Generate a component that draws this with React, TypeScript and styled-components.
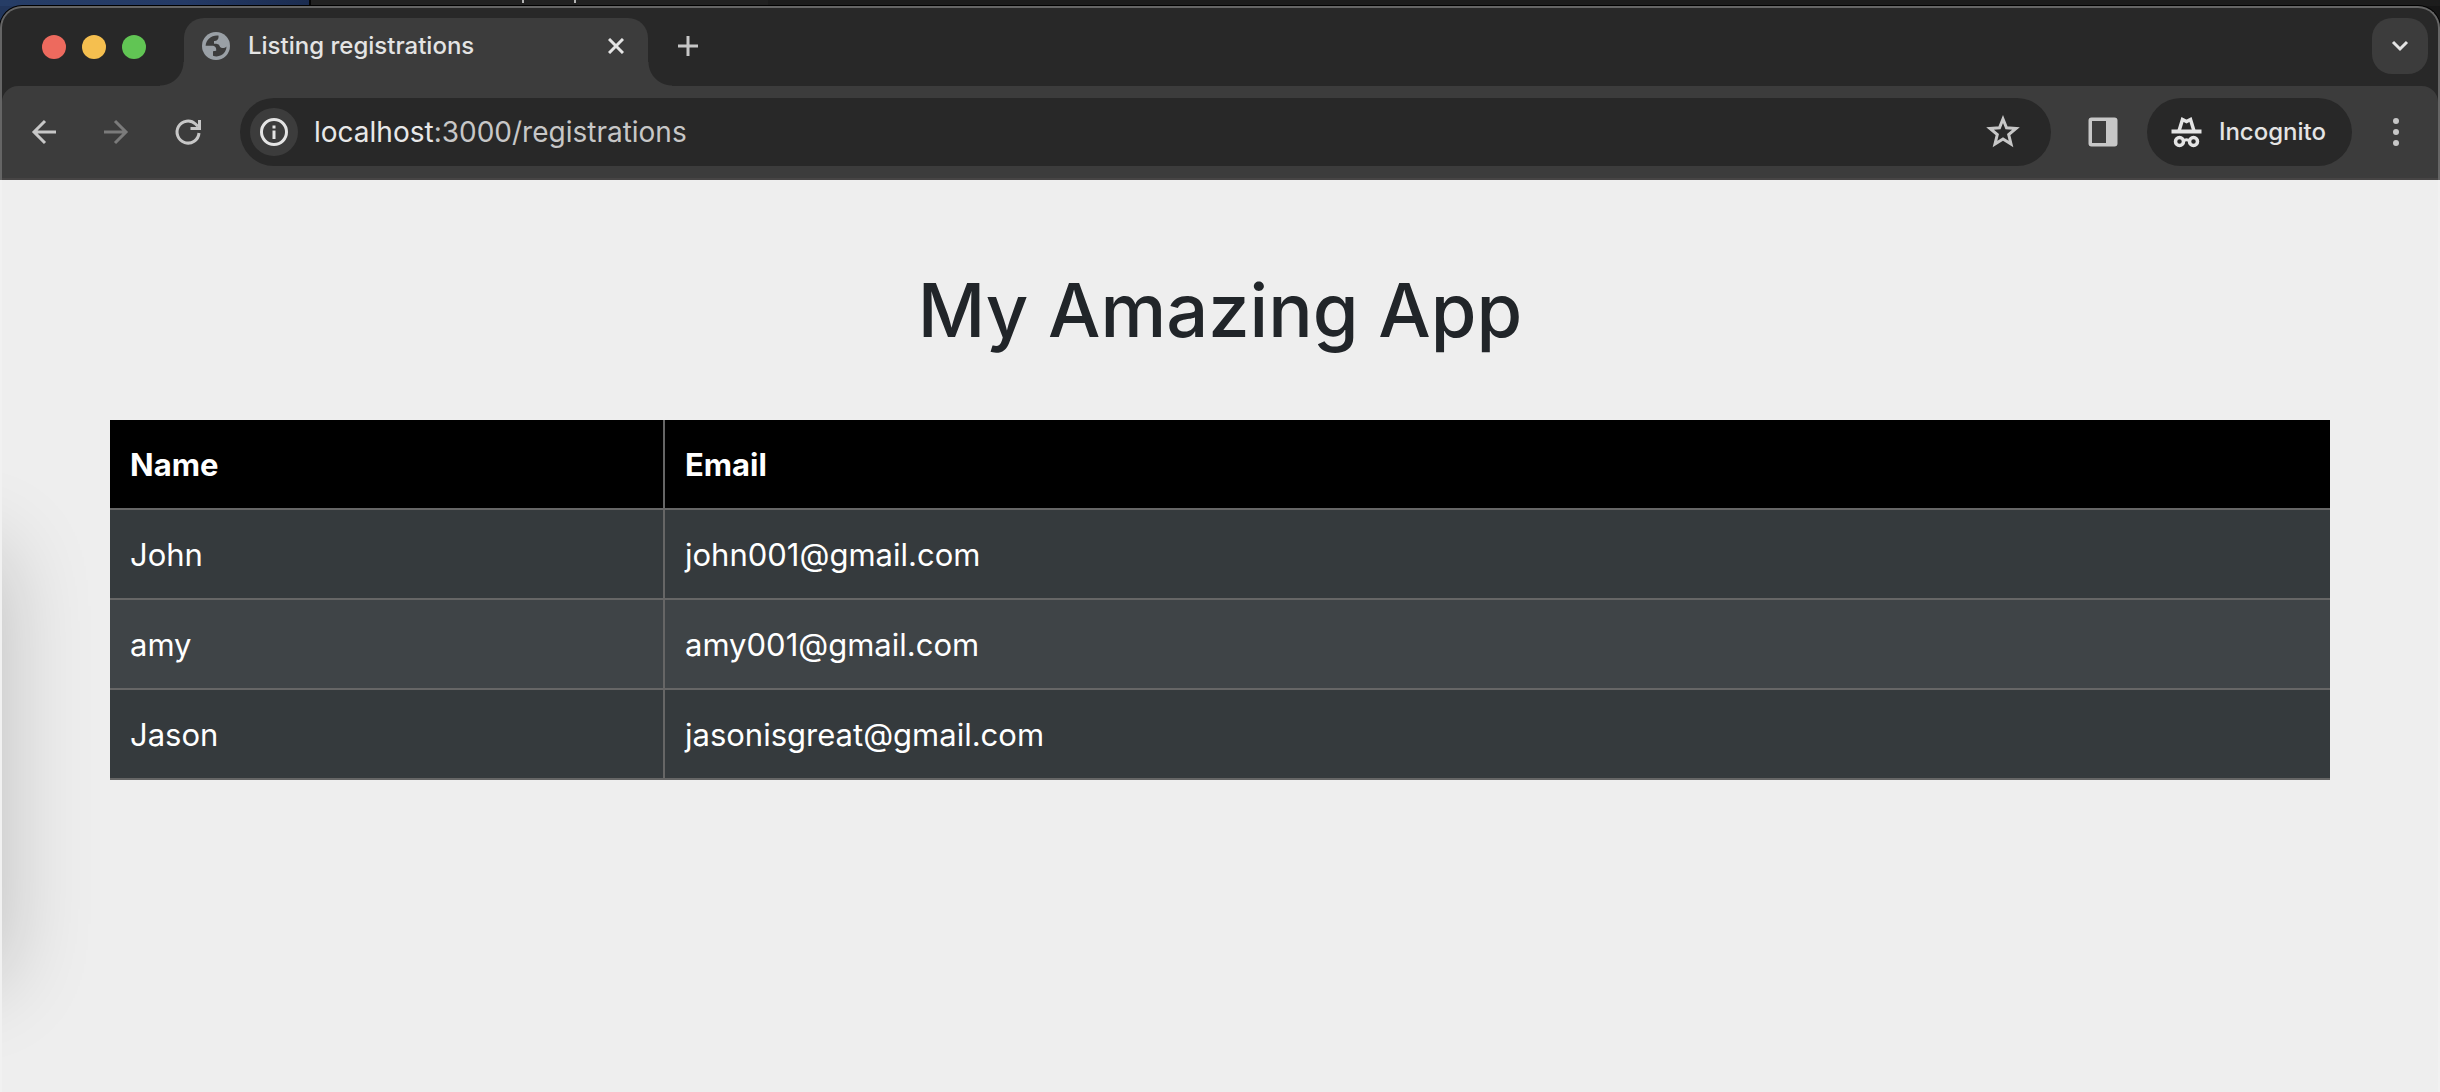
import React from "react";
import styled, { createGlobalStyle, css } from "styled-components";

const GlobalStyle = createGlobalStyle`
  *, *::before, *::after { box-sizing: border-box; }
  html, body { margin: 0; background: #eeeeee; }
  body { font-family: Inter, "Liberation Sans", sans-serif; }
  button, input { font: inherit; color: inherit; }
`;

const Screen = styled.div`
  min-height: 100vh;
  display: flex;
  flex-direction: column;
  background: #1b1b1b;
`;

/* Sliver of the desktop behind the browser window */
const Desktop = styled.div`
  display: flex;
  height: 6px;
  background: #1c1c1c;
`;
const Wallpaper = styled.div`
  width: 311px;
  background: linear-gradient(90deg, #263d66, #243a66 60%, #1b2c50);
  border-right: 2px solid #060606;
`;
const OtherWindow = styled.div`
  display: flex;
  gap: 50px;
  width: 457px;
  padding-left: 211px;
  background: #212121;
`;
const Stroke = styled.span`
  width: 2px;
  height: 3px;
  background: #b4b4b4;
`;

const ChromeBack = styled.div`
  background: linear-gradient(90deg, #22365c 0 311px, #161616 311px);
`;
const Chrome = styled.header`
  background: #282828;
  border: 2px solid #656565;
  border-bottom: 0;
  border-radius: 22px 22px 0 0;
  box-shadow: 0 0 0 1px #000000;
  overflow: hidden;
`;

const TabStrip = styled.div`
  display: flex;
  align-items: flex-end;
  height: 78px;
`;
const Lights = styled.div`
  display: flex;
  gap: 16px;
  align-self: center;
  padding: 0 38px 0 40px;
`;
const Light = styled.button<{ $color: string }>`
  width: 24px;
  height: 24px;
  padding: 0;
  border: 0;
  border-radius: 50%;
  background: ${(p) => p.$color};
`;
const Tab = styled.div`
  position: relative;
  display: flex;
  align-items: center;
  width: 464px;
  height: 68px;
  padding: 0 18px 12px;
  border-radius: 20px 20px 0 0;
  background: #3c3c3c;
  color: #e4e4e4;
  &::before,
  &::after {
    content: "";
    position: absolute;
    bottom: 0;
    width: 24px;
    height: 24px;
  }
  &::before {
    right: 100%;
    background: radial-gradient(circle at 0 0, transparent 23px, #3c3c3c 24px);
  }
  &::after {
    left: 100%;
    background: radial-gradient(circle at 100% 0, transparent 23px, #3c3c3c 24px);
  }
`;
const TabTitle = styled.span`
  flex: 1;
  margin-left: 18px;
  font-size: 24px;
  line-height: 28px;
  font-weight: 500;
  white-space: nowrap;
`;
const IconButton = styled.button<{ $size?: number; $dim?: boolean }>`
  display: grid;
  place-items: center;
  flex: none;
  width: ${(p) => p.$size ?? 56}px;
  height: ${(p) => p.$size ?? 56}px;
  padding: 0;
  border: 0;
  border-radius: 20px;
  background: none;
  color: ${(p) => (p.$dim ? "#7b7b7b" : "#c7c7c7")};
  svg { display: block; }
`;
const CloseButton = styled(IconButton)`
  color: #e4e4e4;
`;
const NewTab = styled(IconButton)`
  margin: 0 auto 12px 12px;
`;
const TabSearch = styled(IconButton)`
  margin: 0 10px 12px 0;
  background: #3c3c3c;
  color: #e4e4e4;
`;

const Toolbar = styled.div`
  display: flex;
  align-items: center;
  height: 94px;
  padding: 10px 14px 10px;
  background: #3c3c3c;
  border-bottom: 2px solid #474545;
  border-radius: 16px 16px 0 0;
`;
const NavButtons = styled.div`
  display: flex;
  gap: 16px;
  margin-right: 24px;
`;
const pill = css`
  display: flex;
  align-items: center;
  height: 68px;
  border: 0;
  border-radius: 34px;
  background: #282828;
`;
const AddressBar = styled.form`
  ${pill}
  flex: 1;
  min-width: 0;
  padding: 0 20px 0 10px;
`;
const SiteInfo = styled(IconButton)`
  border-radius: 50%;
  background: #3c3c3c;
  color: #e4e4e4;
`;
const Url = styled.a`
  flex: 1;
  min-width: 0;
  margin-left: 16px;
  font-size: 28px;
  line-height: 36px;
  color: #c7c7c7;
  text-decoration: none;
  white-space: nowrap;
`;
const Host = styled.span`
  color: #e8e8e8;
`;
const SidePanel = styled(IconButton)`
  margin: 0 16px 0 24px;
`;
const Incognito = styled.button`
  ${pill}
  gap: 17px;
  padding: 0 26px 0 24px;
  color: #e4e4e4;
  font-size: 24px;
  line-height: 28px;
  font-weight: 500;
`;
const Menu = styled(IconButton)`
  margin-left: 16px;
`;

const Page = styled.main`
  position: relative;
  flex: 1;
  padding: 82px 108px 60px;
  border: 2px solid #f1f1f1;
  border-width: 0 2px;
  background: #eeeeee;
  overflow: hidden;
`;
/* Shadow cast on the page by a window off the left edge */
const EdgeShadow = styled.div`
  position: absolute;
  top: 380px;
  left: -100px;
  width: 92px;
  height: 410px;
  box-shadow: 0 0 90px 10px rgba(0, 0, 0, 0.2);
`;
const Title = styled.h1`
  margin: 0 0 62px;
  font-size: 74px;
  line-height: 96px;
  font-weight: 500;
  text-align: center;
  color: #212529;
`;
const Table = styled.table`
  width: 100%;
  table-layout: fixed;
  border-spacing: 0;
  color: #ffffff;
  font-size: 31px;
  line-height: 48px;
`;
const cell = css`
  padding: 21px 20px 19px;
  border-bottom: 2px solid #666666;
  text-align: left;
  &:first-child {
    width: 25%;
    border-right: 2px solid #666666;
  }
`;
const Th = styled.th`
  ${cell}
  background: #000000;
  font-weight: 700;
`;
const Td = styled.td`
  ${cell}
`;
const Row = styled.tr`
  background: #353a3d;
  &:nth-child(even) { background: #3f4447; }
`;

const registrations = [
  { name: "John", email: "john001@gmail.com" },
  { name: "amy", email: "amy001@gmail.com" },
  { name: "Jason", email: "jasonisgreat@gmail.com" },
];

const Globe = () => (
  <svg width="28" height="28" viewBox="0 0 28 28" aria-hidden="true">
    <circle cx="14" cy="14" r="14" fill="#9aa0a6" />
    <path
      d="M16.500 3.500C9.500 2.800 4 7.500 3.600 13.800H10C13 13.800 14.600 15.600 14.200 18.800L11 19.300V23.700C15 25.400 20 24 22.800 20C24 18.200 24.500 16.500 24.400 14.600C22.500 16.800 18.500 16.600 17.600 14C17 12.200 15.500 11.800 12 11.800V9C14.500 9 17 7.800 16.500 3.500Z"
      fill="#3c3c3c"
    />
  </svg>
);

const Line = ({ d, size = 28, width = 3 }: { d: string; size?: number; width?: number }) => (
  <svg width={size} height={size} viewBox={`0 0 ${size} ${size}`} fill="none" stroke="currentColor" strokeWidth={width} aria-hidden="true">
    <path d={d} />
  </svg>
);

export default function App() {
  return (
    <Screen>
      <GlobalStyle />
      <Desktop>
        <Wallpaper />
        <OtherWindow>
          <Stroke />
          <Stroke />
        </OtherWindow>
      </Desktop>
      <ChromeBack>
        <Chrome>
          <TabStrip>
            <Lights>
              <Light $color="#ed6a5e" aria-label="Close window" />
              <Light $color="#f5bf4f" aria-label="Minimize window" />
              <Light $color="#61c554" aria-label="Zoom window" />
            </Lights>
            <Tab>
              <Globe />
              <TabTitle>Listing registrations</TabTitle>
              <CloseButton $size={28} aria-label="Close tab">
                <Line size={16} d="M1 1 15 15M15 1 1 15" />
              </CloseButton>
            </Tab>
            <NewTab aria-label="New tab">
              <Line size={20} d="M10 0V20M0 10H20" />
            </NewTab>
            <TabSearch aria-label="Search tabs">
              <Line size={20} d="M3 6 10 13 17 6" />
            </TabSearch>
          </TabStrip>
          <Toolbar>
            <NavButtons>
              <IconButton aria-label="Back">
                <Line d="M26 14H4M15 3 4 14 15 25" />
              </IconButton>
              <IconButton $dim aria-label="Forward">
                <Line d="M2 14H24M13 3 24 14 13 25" />
              </IconButton>
              <IconButton aria-label="Reload">
                <Line d="M25 15A11 11 0 1 1 21.500 6L24 8.500M25.500 2V10.500H16.500" />
              </IconButton>
            </NavButtons>
            <AddressBar>
              <SiteInfo $size={48} type="button" aria-label="View site information">
                <svg width="28" height="28" viewBox="0 0 28 28" fill="currentColor" aria-hidden="true">
                  <circle cx="14" cy="14" r="12.500" fill="none" stroke="currentColor" strokeWidth="3" />
                  <rect x="12.500" y="12.500" width="3" height="8.500" />
                  <rect x="12.500" y="7.500" width="3" height="3" />
                </svg>
              </SiteInfo>
              <Url href="#registrations">
                <Host>localhost</Host>:3000/registrations
              </Url>
              <IconButton type="button" aria-label="Bookmark this tab">
                <svg width="34" height="34" viewBox="0 0 34 34" fill="none" stroke="currentColor" strokeWidth="3" aria-hidden="true">
                  <path d="M17 4 20.500 12.800 30 13.500 22.700 19.600 25 29 17 24 9 29 11.300 19.600 4 13.500 13.500 12.800Z" />
                </svg>
              </IconButton>
            </AddressBar>
            <SidePanel aria-label="Side panel">
              <svg width="30" height="30" viewBox="0 0 30 30" aria-hidden="true">
                <path
                  fill="currentColor"
                  fillRule="evenodd"
                  d="M3.500.500H26.500a3 3 0 0 1 3 3V26.500a3 3 0 0 1-3 3H3.500a3 3 0 0 1-3-3V3.500a3 3 0 0 1 3-3ZM4 4V26H18V4Z"
                />
              </svg>
            </SidePanel>
            <Incognito>
              <svg width="31" height="31" viewBox="0 0 31 31" fill="none" stroke="currentColor" aria-hidden="true">
                <path d="M.5 14.500H30.500" strokeWidth="4" />
                <path d="M8 14 11.500 2.500 15.500 4.500 19.500 2.500 23 14" strokeWidth="3.500" />
                <circle cx="8.500" cy="24.500" r="4" strokeWidth="3.500" />
                <circle cx="22.500" cy="24.500" r="4" strokeWidth="3.500" />
                <path d="M12 24C14 22.500 17 22.500 19 24" strokeWidth="3" />
              </svg>
              Incognito
            </Incognito>
            <Menu aria-label="Menu">
              <svg width="6" height="28" viewBox="0 0 6 28" fill="currentColor" aria-hidden="true">
                <circle cx="3" cy="3" r="3" />
                <circle cx="3" cy="14" r="3" />
                <circle cx="3" cy="25" r="3" />
              </svg>
            </Menu>
          </Toolbar>
        </Chrome>
      </ChromeBack>
      <Page>
        <EdgeShadow />
        <Title>My Amazing App</Title>
        <Table>
          <thead>
            <tr>
              <Th scope="col">Name</Th>
              <Th scope="col">Email</Th>
            </tr>
          </thead>
          <tbody>
            {registrations.map((r) => (
              <Row key={r.email}>
                <Td>{r.name}</Td>
                <Td>{r.email}</Td>
              </Row>
            ))}
          </tbody>
        </Table>
      </Page>
    </Screen>
  );
}
